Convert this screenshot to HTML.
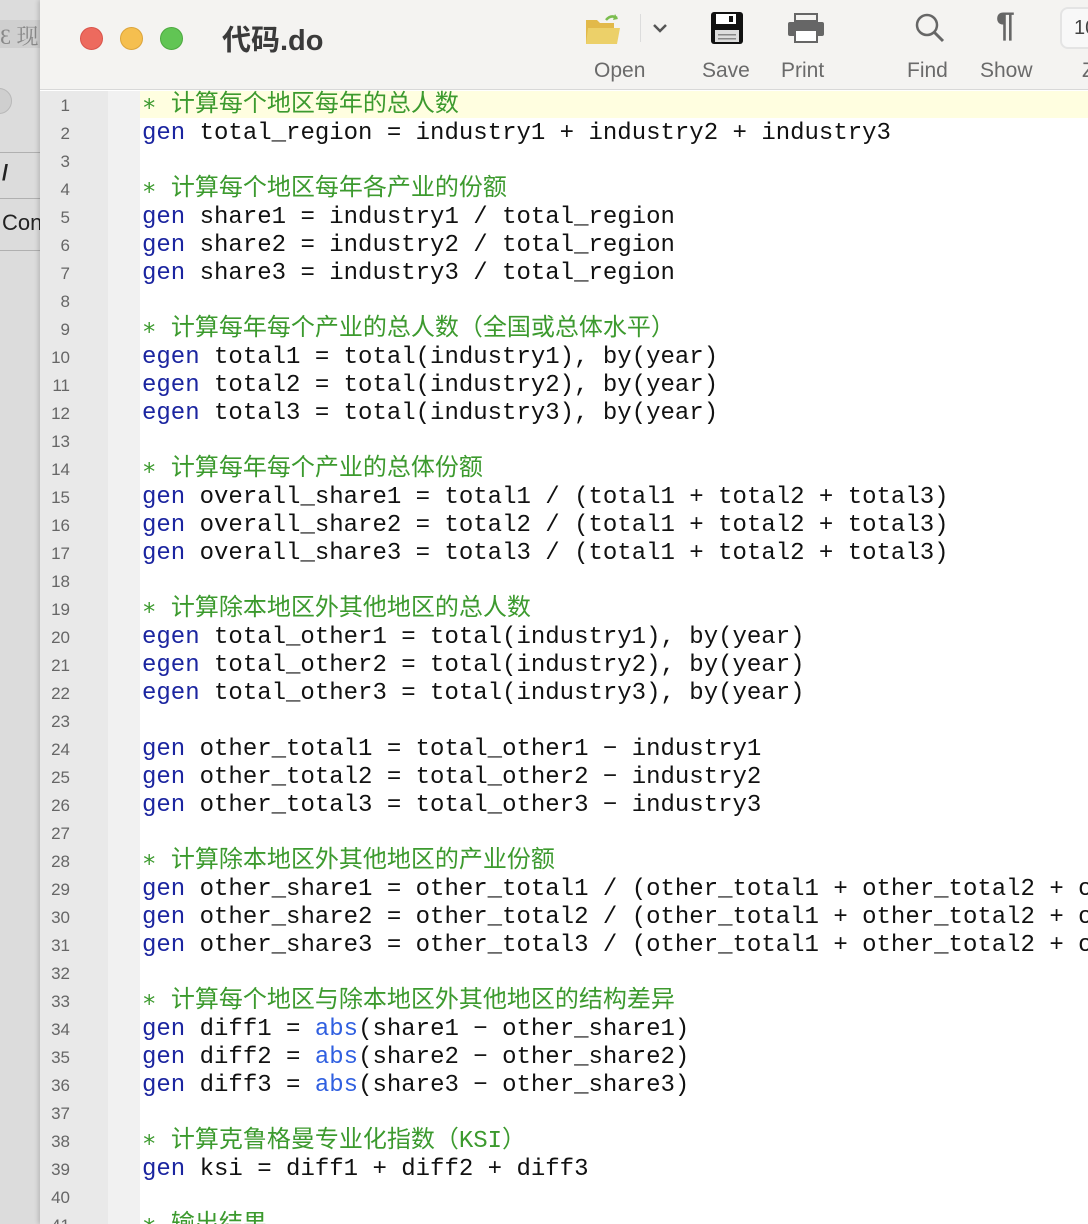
<!DOCTYPE html>
<html><head><meta charset="utf-8"><style>
*{margin:0;padding:0;box-sizing:border-box}
html,body{width:1088px;height:1224px;overflow:hidden;background:#fff}
body{position:relative;font-family:"Liberation Sans","Noto Sans CJK SC",sans-serif}
#bg{position:absolute;left:0;top:0;width:40px;height:1224px;background:#dcdcdc;overflow:hidden}
#bg .a{position:absolute;left:0;top:20px;width:40px;height:28px;background:#cfcfcf;color:#888;font:22px "Liberation Serif","Noto Serif CJK SC",serif;white-space:nowrap;overflow:hidden}
#bg .c{position:absolute;top:88px;width:26px;height:26px;border-radius:50%;background:#cfcfcf;border:1px solid #b8b8b8}
#bg .l{position:absolute;left:0;width:40px;height:1px;background:#b0b0b0}
#bg .t{position:absolute;left:2px;top:210px;font-size:22px;color:#222}
#win{position:absolute;left:40px;top:0;width:1048px;height:1224px;background:#fff;box-shadow:-2px 0 4px rgba(0,0,0,.15);overflow:hidden}
#tb{position:absolute;left:0;top:0;width:1048px;height:90px;background:#f4f3f1;border-bottom:1px solid #d8d8d8}
.dot{position:absolute;top:27px;width:23px;height:23px;border-radius:50%}
#title{position:absolute;left:182px;top:17px;font-size:29px;font-weight:bold;color:#3a3a3a}
.lab{position:absolute;top:59px;font-size:21px;color:#6a6a6a}
#gut{position:absolute;left:0;top:91px;width:68px;height:1133px;background:#e9e9e9}
#gut2{position:absolute;left:68px;top:91px;width:32px;height:1133px;background:#f1f1f1}
#hl{position:absolute;left:100px;top:91px;width:948px;height:27px;background:#fffee0}
.ln{position:absolute;left:0;width:30px;text-align:right;font-size:17px;color:#666;line-height:28px}
.cd{position:absolute;left:102px;font-family:"Liberation Mono","Noto Sans CJK SC",monospace;font-size:24px;line-height:28px;white-space:pre;color:#111}
.k{color:#1b25a0}.f{color:#2f5fe0}.g{color:#3c9a2e}
</style></head><body>
<div id="bg"><div class="a">Ɛ 现</div><div class="c" style="left:-14px"></div><div class="l" style="top:152px"></div><div class="t" style="top:160px;font-weight:bold">/</div><div class="l" style="top:198px"></div><div class="t">Con</div><div class="l" style="top:250px"></div></div>
<div id="win">
<div id="tb">
<div class="dot" style="left:40px;background:#ed6a5e;border:1px solid #d9534a"></div>
<div class="dot" style="left:80px;background:#f5bf4f;border:1px solid #dca43a"></div>
<div class="dot" style="left:120px;background:#61c554;border:1px solid #4ca93f"></div>
<div id="title">代码.do</div>
<svg style="position:absolute;left:545px;top:12px" width="36" height="34" viewBox="0 0 36 34"><path d="M1 8h11l3 3h14v21H1z" fill="#e2b94a"/><path d="M3 16h32l-3 16H1z" fill="#ecd069"/><path d="M21 8q5-6 11-2" stroke="#7bbd4f" stroke-width="2.5" fill="none"/><path d="M30 2l3 5-5 1z" fill="#7bbd4f"/></svg>
<div style="position:absolute;left:600px;top:14px;width:1px;height:28px;background:#dcdcdc"></div>
<svg style="position:absolute;left:612px;top:22px" width="16" height="12"><path d="M2 3l6 6 6-6" stroke="#555" stroke-width="2.5" fill="none"/></svg>
<svg style="position:absolute;left:670px;top:11px" width="34" height="34" viewBox="0 0 34 34"><rect x="1" y="1" width="32" height="32" rx="3" fill="#111"/><rect x="6" y="3" width="20" height="10" fill="#fff"/><rect x="19" y="5" width="4" height="6" fill="#111"/><rect x="5" y="19" width="24" height="12" fill="#ddd"/><rect x="8" y="23" width="18" height="1.5" fill="#888"/><rect x="8" y="27" width="18" height="1.5" fill="#888"/></svg>
<svg style="position:absolute;left:747px;top:13px" width="38" height="30" viewBox="0 0 38 30"><rect x="8" y="1" width="22" height="7" fill="none" stroke="#666" stroke-width="2"/><rect x="1" y="9" width="36" height="14" rx="2" fill="#666"/><rect x="8" y="17" width="22" height="12" fill="#fff" stroke="#666" stroke-width="2"/></svg>
<svg style="position:absolute;left:874px;top:12px" width="32" height="32"><circle cx="13" cy="13" r="10" fill="none" stroke="#666" stroke-width="2.5"/><path d="M20 20l9 9" stroke="#666" stroke-width="3"/></svg>
<div style="position:absolute;left:956px;top:6px;font-size:34px;font-weight:bold;color:#666">¶</div>
<div style="position:absolute;left:1020px;top:7px;width:60px;height:42px;border:2px solid #e4e4e4;border-radius:8px;background:#f8f8f8;font-size:20px;color:#444;padding:8px 12px">10</div>
<div class="lab" style="left:554px">Open</div><div class="lab" style="left:662px">Save</div><div class="lab" style="left:741px">Print</div><div class="lab" style="left:867px">Find</div><div class="lab" style="left:940px">Show</div><div class="lab" style="left:1042px">Z</div>
</div>
<div id="gut"></div><div id="gut2"></div><div id="hl"></div>
<div style="position:absolute;left:0;top:92px;width:68px">
<div class="ln" style="top:0">1</div><div class="ln" style="top:28px">2</div><div class="ln" style="top:56px">3</div><div class="ln" style="top:84px">4</div><div class="ln" style="top:112px">5</div><div class="ln" style="top:140px">6</div><div class="ln" style="top:168px">7</div><div class="ln" style="top:196px">8</div><div class="ln" style="top:224px">9</div><div class="ln" style="top:252px">10</div><div class="ln" style="top:280px">11</div><div class="ln" style="top:308px">12</div><div class="ln" style="top:336px">13</div><div class="ln" style="top:364px">14</div><div class="ln" style="top:392px">15</div><div class="ln" style="top:420px">16</div><div class="ln" style="top:448px">17</div><div class="ln" style="top:476px">18</div><div class="ln" style="top:504px">19</div><div class="ln" style="top:532px">20</div><div class="ln" style="top:560px">21</div><div class="ln" style="top:588px">22</div><div class="ln" style="top:616px">23</div><div class="ln" style="top:644px">24</div><div class="ln" style="top:672px">25</div><div class="ln" style="top:700px">26</div><div class="ln" style="top:728px">27</div><div class="ln" style="top:756px">28</div><div class="ln" style="top:784px">29</div><div class="ln" style="top:812px">30</div><div class="ln" style="top:840px">31</div><div class="ln" style="top:868px">32</div><div class="ln" style="top:896px">33</div><div class="ln" style="top:924px">34</div><div class="ln" style="top:952px">35</div><div class="ln" style="top:980px">36</div><div class="ln" style="top:1008px">37</div><div class="ln" style="top:1036px">38</div><div class="ln" style="top:1064px">39</div><div class="ln" style="top:1092px">40</div><div class="ln" style="top:1120px">41</div>
</div>
<div class="cd" style="top:92px"><span class="g">∗ 计算每个地区每年的总人数</span>
<span class="k">gen</span> total_region = industry1 + industry2 + industry3

<span class="g">∗ 计算每个地区每年各产业的份额</span>
<span class="k">gen</span> share1 = industry1 / total_region
<span class="k">gen</span> share2 = industry2 / total_region
<span class="k">gen</span> share3 = industry3 / total_region

<span class="g">∗ 计算每年每个产业的总人数（全国或总体水平）</span>
<span class="k">egen</span> total1 = total(industry1), by(year)
<span class="k">egen</span> total2 = total(industry2), by(year)
<span class="k">egen</span> total3 = total(industry3), by(year)

<span class="g">∗ 计算每年每个产业的总体份额</span>
<span class="k">gen</span> overall_share1 = total1 / (total1 + total2 + total3)
<span class="k">gen</span> overall_share2 = total2 / (total1 + total2 + total3)
<span class="k">gen</span> overall_share3 = total3 / (total1 + total2 + total3)

<span class="g">∗ 计算除本地区外其他地区的总人数</span>
<span class="k">egen</span> total_other1 = total(industry1), by(year)
<span class="k">egen</span> total_other2 = total(industry2), by(year)
<span class="k">egen</span> total_other3 = total(industry3), by(year)

<span class="k">gen</span> other_total1 = total_other1 − industry1
<span class="k">gen</span> other_total2 = total_other2 − industry2
<span class="k">gen</span> other_total3 = total_other3 − industry3

<span class="g">∗ 计算除本地区外其他地区的产业份额</span>
<span class="k">gen</span> other_share1 = other_total1 / (other_total1 + other_total2 + other_total3)
<span class="k">gen</span> other_share2 = other_total2 / (other_total1 + other_total2 + other_total3)
<span class="k">gen</span> other_share3 = other_total3 / (other_total1 + other_total2 + other_total3)

<span class="g">∗ 计算每个地区与除本地区外其他地区的结构差异</span>
<span class="k">gen</span> diff1 = <span class="f">abs</span>(share1 − other_share1)
<span class="k">gen</span> diff2 = <span class="f">abs</span>(share2 − other_share2)
<span class="k">gen</span> diff3 = <span class="f">abs</span>(share3 − other_share3)

<span class="g">∗ 计算克鲁格曼专业化指数（KSI）</span>
<span class="k">gen</span> ksi = diff1 + diff2 + diff3

<span class="g">∗ 输出结果</span></div>
</div>
</body></html>
